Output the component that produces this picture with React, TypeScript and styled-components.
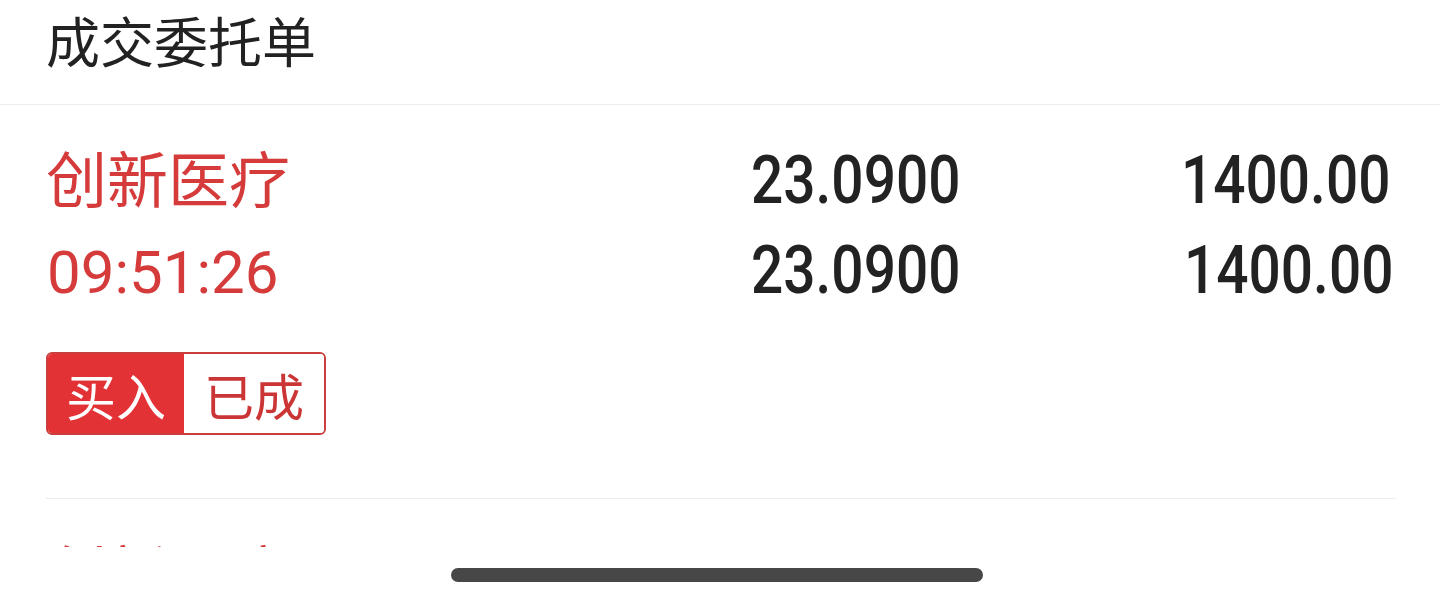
import React from "react";
import styled, { createGlobalStyle } from "styled-components";

const Global = createGlobalStyle`
  html, body { margin: 0; padding: 0; background: #ffffff; }
  body { font-family: "Noto Sans CJK SC", "Noto Sans", sans-serif; }
`;

const Screen = styled.div`
  width: 1440px;
  height: 603px;
  display: flex;
  flex-direction: column;
  background: #ffffff;
  overflow: hidden;
`;

const Content = styled.div`
  height: 547px;
  overflow: hidden;
  display: flex;
  flex-direction: column;
`;

const Header = styled.div`
  height: 104px;
  flex: none;
  border-bottom: 1px solid #ececec;
  padding-left: 46px;
  display: flex;
  align-items: flex-start;
`;

const Title = styled.h1`
  margin: 0;
  font-size: 54px;
  font-weight: 400;
  line-height: 80px;
  color: #222222;
`;

const Order = styled.div`
  flex: none;
  margin: 0 44px 0 46px;
  padding: 25px 0 63px;
  border-bottom: 1px solid #ececec;
`;

const Line = styled.div`
  display: grid;
  grid-template-columns: 1fr 260px 436px;
  align-items: baseline;
  height: 94px;
`;

const Name = styled.div`
  font-size: 61px;
  line-height: 94px;
  color: #d63b3b;
`;

const Time = styled.div`
  font-family: Roboto, "Noto Sans", sans-serif;
  font-size: 60px;
  line-height: 94px;
  color: #d63b3b;
  padding-left: 1px;
`;

const Cell = styled.div<{ $pad?: number }>`
  text-align: right;
  padding-right: ${(p) => p.$pad ?? 0}px;
  line-height: 94px;
`;

const Num = styled.span`
  display: inline-block;
  font-family: Roboto, "Noto Sans", sans-serif;
  font-size: 66px;
  font-weight: 500;
  color: #222222;
  transform: scaleX(0.86);
  transform-origin: right center;
`;

const Tags = styled.div`
  margin-top: 34px;
  display: inline-flex;
  height: 83px;
  border: 2px solid #cc3e3e;
  border-radius: 6px;
  overflow: hidden;
  box-sizing: border-box;
`;

const Tag = styled.span<{ $filled?: boolean }>`
  display: flex;
  align-items: center;
  padding: 0 ${(p) => (p.$filled ? 18 : 20)}px;
  font-size: 50px;
  color: ${(p) => (p.$filled ? "#ffffff" : "#cc3535")};
  background: ${(p) => (p.$filled ? "#e33236" : "#ffffff")};
`;

const Footer = styled.div`
  flex: 1;
  display: flex;
  justify-content: center;
  padding-top: 21px;
  padding-right: 6px;
`;

const HomeBar = styled.div`
  width: 532px;
  height: 14px;
  border-radius: 7px;
  background: #474747;
`;

type OrderData = {
  name: string;
  time: string;
  price: string;
  dealPrice: string;
  qty: string;
  dealQty: string;
  side: string;
  status: string;
};

const orders: OrderData[] = [
  {
    name: "创新医疗",
    time: "09:51:26",
    price: "23.0900",
    dealPrice: "23.0900",
    qty: "1400.00",
    dealQty: "1400.00",
    side: "买入",
    status: "已成",
  },
  {
    name: "创新医疗",
    time: "09:48:10",
    price: "23.1000",
    dealPrice: "23.1000",
    qty: "1000.00",
    dealQty: "1000.00",
    side: "买入",
    status: "已成",
  },
];

export default function App() {
  return (
    <Screen>
      <Global />
      <Content>
        <Header>
          <Title>成交委托单</Title>
        </Header>
        {orders.map((o, i) => (
          <Order key={i}>
            <Line>
              <Name>{o.name}</Name>
              <Cell>
                <Num>{o.price}</Num>
              </Cell>
              <Cell $pad={6}>
                <Num>{o.qty}</Num>
              </Cell>
            </Line>
            <Line>
              <Time>{o.time}</Time>
              <Cell>
                <Num>{o.dealPrice}</Num>
              </Cell>
              <Cell $pad={3}>
                <Num>{o.dealQty}</Num>
              </Cell>
            </Line>
            <Tags>
              <Tag $filled>{o.side}</Tag>
              <Tag>{o.status}</Tag>
            </Tags>
          </Order>
        ))}
      </Content>
      <Footer>
        <HomeBar />
      </Footer>
    </Screen>
  );
}
